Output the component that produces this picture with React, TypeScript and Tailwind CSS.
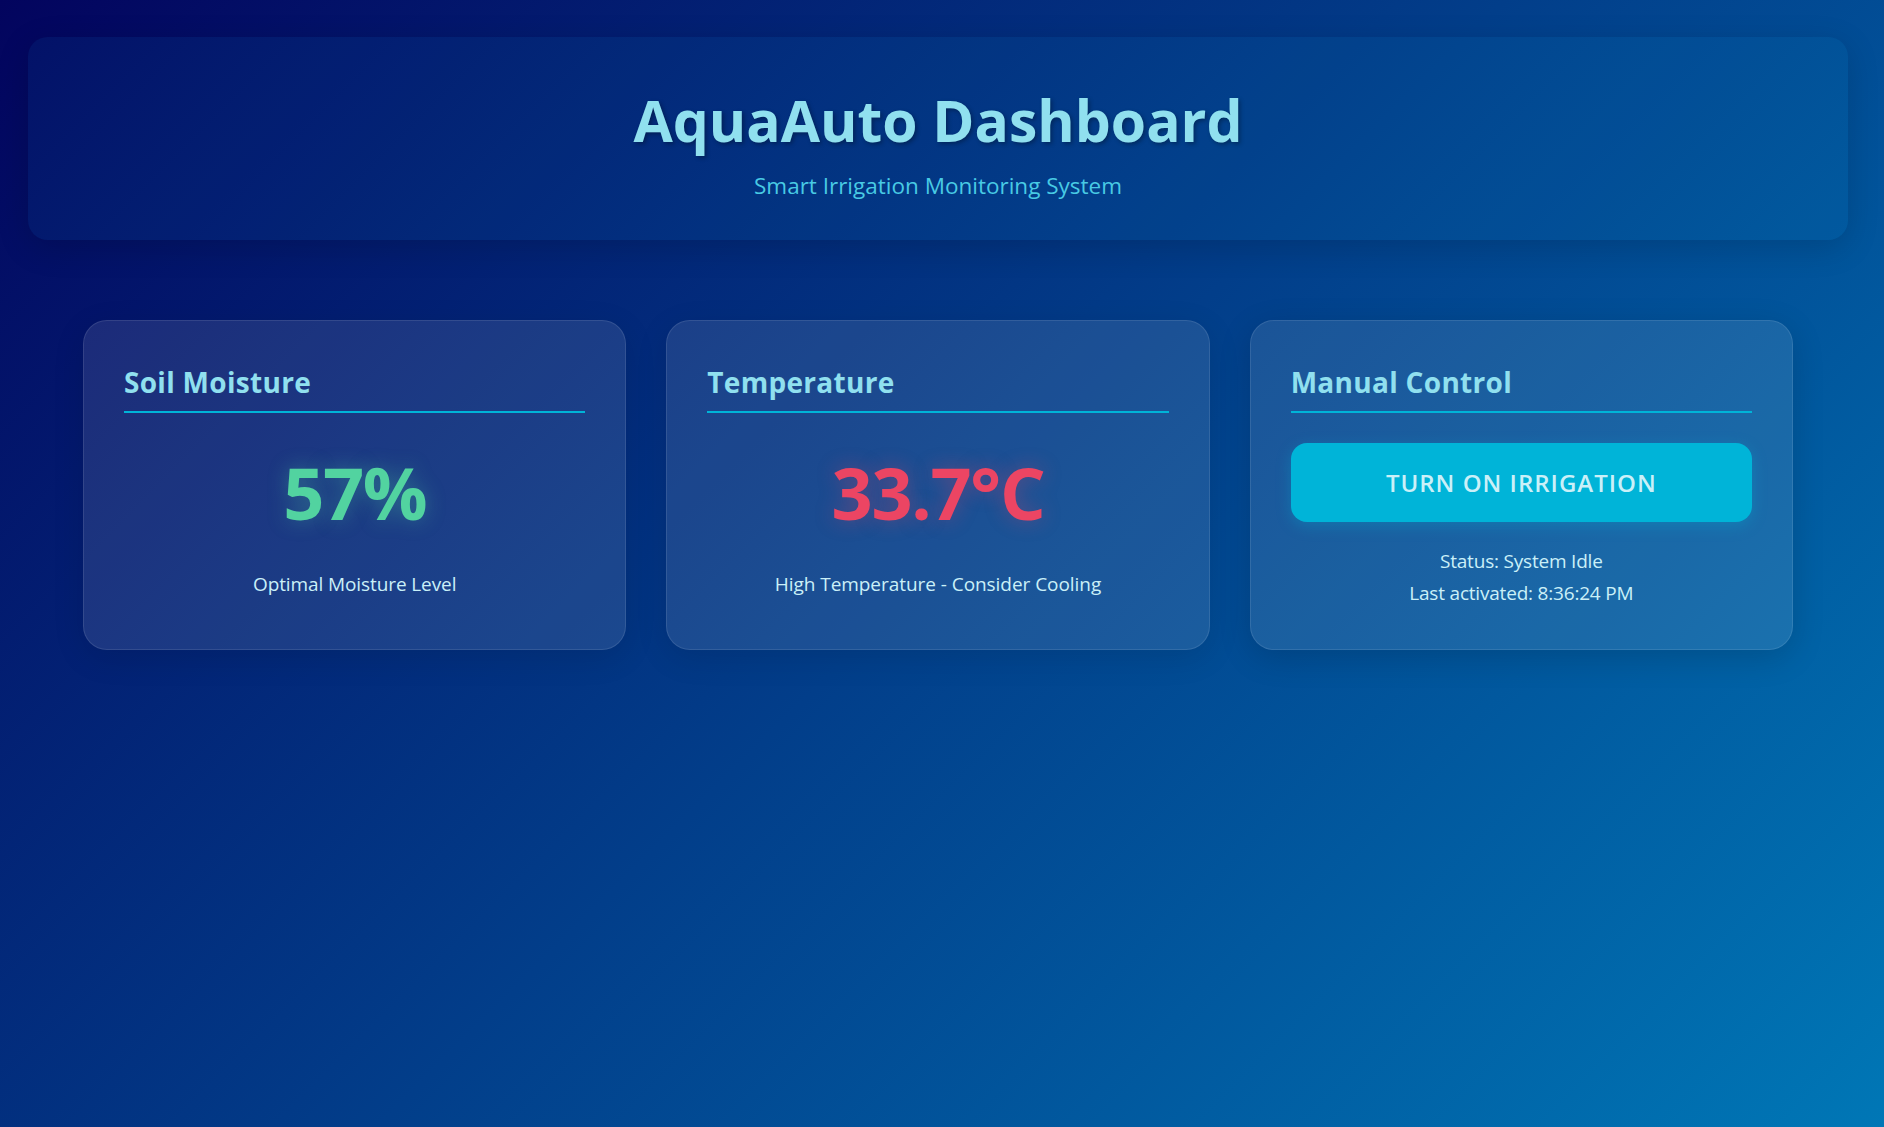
import { useState } from "react"

const font = { fontFamily: '"Open Sans", "Noto Sans", sans-serif' }

function CardTitle({ children }: { children: string }) {
  return (
    <div className="border-b-2 border-[#00b4d8] pt-[4px] pb-[12px]">
      <h2 className="text-[28px] leading-[34px] font-bold text-[#90e0ef] tracking-[0.3px]">{children}</h2>
    </div>
  )
}

export default function App() {
  const [on, setOn] = useState(false)
  const [lastActivated, setLastActivated] = useState("8:36:24 PM")

  const toggle = () => {
    setOn(!on)
    if (!on) setLastActivated(new Date().toLocaleTimeString("en-US"))
  }

  return (
    <div
      style={font}
      className="min-h-[1127px] w-full bg-[linear-gradient(135deg,#03045e_0%,#023e8a_50%,#0077b6_100%)] pl-[28px] pr-[36px] pt-[37px] text-[#caf0f8]"
    >
      {/* header */}
      <header className="h-[203px] rounded-[20px] bg-[#0096c7]/[0.08] shadow-[0_8px_32px_rgba(0,0,0,0.15)] pt-[50px] text-center">
        <h1 className="text-[57px] leading-[67px] font-bold text-[#90e0ef] [text-shadow:2px_2px_4px_rgba(0,0,0,0.3)]">
          AquaAuto Dashboard
        </h1>
        <p className="mt-[15px] text-[22.5px] leading-[33px] text-[#48cae4]">Smart Irrigation Monitoring System</p>
      </header>

      {/* cards */}
      <div className="mt-[80px] px-[55px] grid grid-cols-3 gap-[40px]">
        <div className="rounded-[24px] border border-white/10 bg-white/10 p-[40px] shadow-[0_8px_32px_rgba(0,0,0,0.1)]">
          <CardTitle>Soil Moisture</CardTitle>
          <div className="mt-[36px] text-center text-[72px] leading-[86px] font-bold text-[#52d3a0] tracking-[-1.5px] [text-shadow:0_0_20px_rgba(82,211,160,0.35)]">
            57%
          </div>
          <p className="mt-[35px] text-center text-[19px] leading-[29px] tracking-[-0.1px]">Optimal Moisture Level</p>
        </div>

        <div className="rounded-[24px] border border-white/10 bg-white/10 p-[40px] shadow-[0_8px_32px_rgba(0,0,0,0.1)]">
          <CardTitle>Temperature</CardTitle>
          <div className="mt-[36px] text-center text-[72px] leading-[86px] font-bold text-[#ec4563] tracking-[-1.3px] [text-shadow:0_0_20px_rgba(236,69,99,0.35)]">
            33.7°C
          </div>
          <p className="mt-[35px] text-center text-[19px] leading-[29px] tracking-[-0.05px]">High Temperature - Consider Cooling</p>
        </div>

        <div className="rounded-[24px] border border-white/10 bg-white/10 p-[40px] shadow-[0_8px_32px_rgba(0,0,0,0.15)]">
          <CardTitle>Manual Control</CardTitle>
          <button
            onClick={toggle}
            className="mt-[30px] w-full h-[79px] rounded-[16px] bg-[#00b4d8] text-[24px] font-semibold uppercase tracking-[1px] text-[#caf0f8] shadow-[0_4px_15px_rgba(0,180,216,0.3)]"
          >
            {on ? "Turn Off Irrigation" : "Turn On Irrigation"}
          </button>
          <div className="mt-[23px] text-center text-[19px] leading-[32px] tracking-[-0.2px]">
            <p>Status: {on ? "Irrigation Active" : "System Idle"}</p>
            <p>Last activated: {lastActivated}</p>
          </div>
        </div>
      </div>
    </div>
  )
}
